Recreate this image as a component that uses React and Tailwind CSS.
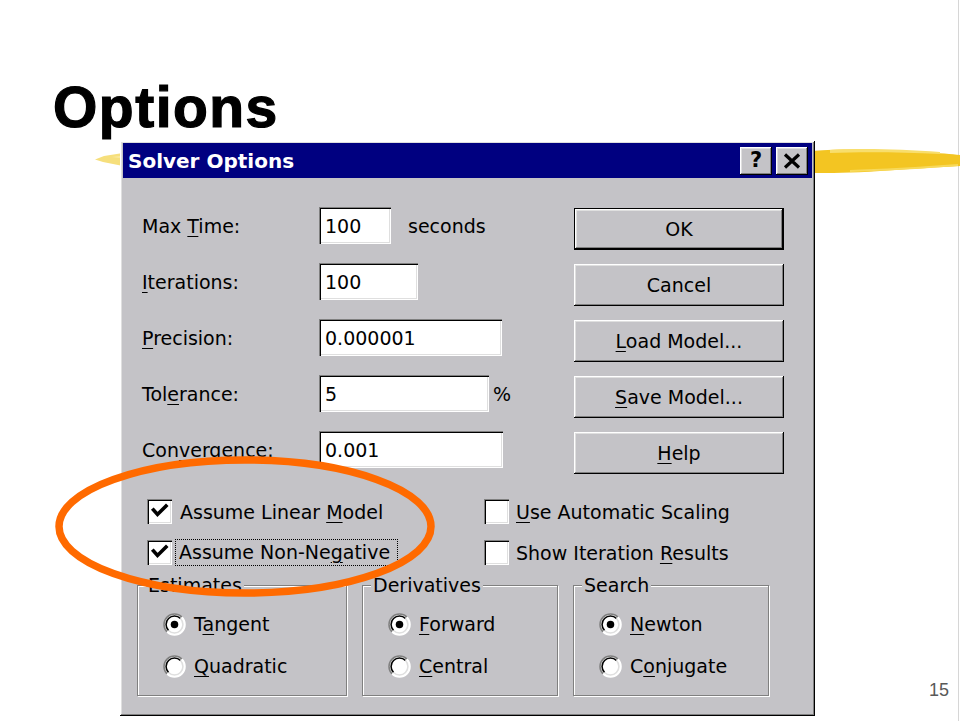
import React from 'react'

const raised =
  'shadow-[inset_-1px_-1px_0_#000,inset_1px_1px_0_#fff,inset_-2px_-2px_0_#808080,inset_2px_2px_0_#dfdfdf]'
const sunken =
  'shadow-[inset_1px_1px_0_#808080,inset_2px_2px_0_#000,inset_-1px_-1px_0_#fff,inset_-2px_-2px_0_#dfdfdf]'

const Key = ({ children }) => (
  <span className="underline underline-offset-[3px] decoration-1">{children}</span>
)

const Field = ({ label, value, width, suffix, suffixGap }) => (
  <div className="flex h-[56px] items-start">
    <div className="w-[177px] leading-[38px]">{label}</div>
    <div className={`h-[37px] bg-white pl-[6px] leading-[38px] ${sunken}`} style={{ width }}>
      {value}
    </div>
    {suffix && (
      <div className="leading-[38px]" style={{ marginLeft: suffixGap }}>
        {suffix}
      </div>
    )}
  </div>
)

const Btn = ({ children, isDefault }) =>
  isDefault ? (
    <div className="h-[42px] border border-black">
      <div className={`flex h-full items-center justify-center bg-[#c4c3c7] ${raised}`}>{children}</div>
    </div>
  ) : (
    <div className={`flex h-[42px] items-center justify-center bg-[#c4c3c7] ${raised}`}>{children}</div>
  )

const Check = ({ checked }) => (
  <div className={`relative h-[25px] w-[25px] shrink-0 bg-white ${sunken}`}>
    {checked && (
      <svg viewBox="0 0 25 25" className="absolute inset-0 h-full w-full">
        <path d="M6.5 11 L10.5 15.5 L19 7" fill="none" stroke="#000" strokeWidth="3.6" strokeLinecap="square" />
      </svg>
    )}
  </div>
)

const Radio = ({ checked }) => (
  <svg width="23" height="23" viewBox="0 0 22 22" className="shrink-0">
    <circle cx="11" cy="11" r="10" fill="#fff" />
    <path d="M3.9 18.1 A10 10 0 0 1 18.1 3.9" fill="none" stroke="#808080" strokeWidth="1.5" />
    <path d="M5.3 16.7 A8 8 0 0 1 16.7 5.3" fill="none" stroke="#000" strokeWidth="1.5" />
    <path d="M18.1 3.9 A10 10 0 0 1 3.9 18.1" fill="none" stroke="#fff" strokeWidth="1.5" />
    <path d="M16.7 5.3 A8 8 0 0 1 5.3 16.7" fill="none" stroke="#dfdfdf" strokeWidth="1.5" />
    {checked && <circle cx="11" cy="11" r="3.6" fill="#000" />}
  </svg>
)

const Group = ({ title, width, items }) => (
  <div
    className="relative h-[111px] border border-[#808080] shadow-[1px_1px_0_#fff,inset_1px_1px_0_#fff]"
    style={{ width }}
  >
    <span className="absolute left-[8px] top-[-12px] bg-[#c4c3c7] px-[2px] leading-[22px]">{title}</span>
    <div className="flex flex-col gap-[19px] pl-[25px] pt-[27px]">
      {items.map((it, i) => (
        <div key={i} className="flex h-[23px] items-center gap-[8px] leading-[23px]">
          <Radio checked={i === 0} />
          <span>{it}</span>
        </div>
      ))}
    </div>
  </div>
)

export default function App() {
  return (
    <div className="relative h-[721px] w-[962px] overflow-hidden bg-white">
      {/* slide edge */}
      <div className="absolute bottom-0 right-[3px] top-0 w-px bg-[#d6d6d6]" />

      {/* yellow brush strokes behind the dialog */}
      <svg className="absolute left-0 top-[140px]" width="962" height="40" viewBox="0 140 962 40">
        <path d="M123 153 L104 156 L95 159.5 L103 162 L123 166 Z" fill="#f6df7c" />
        <path d="M112 157 L123 156 L123 158 Z" fill="#fbeeb0" />
        <path
          d="M812 151 C850 148 890 150 920 152 C940 153 952 154 960 155 L960 166 C940 167 910 169 880 171 C850 173 830 173 812 173 Z"
          fill="#f3c522"
        />
        <path d="M830 150 C860 148 900 149 940 152 L940 154 C900 152 860 152 830 153 Z" fill="#f8de6c" />
        <path d="M850 170 C880 169 920 167 958 164 L958 166 C920 169 880 171 850 172 Z" fill="#f7d95a" />
      </svg>

      <h1 className="pl-[53px] pt-[79px] font-['Liberation_Sans',Arial,sans-serif] text-[57px] font-bold leading-none tracking-[1.5px] text-black [-webkit-text-stroke:1.2px_black]">
        Options
      </h1>

      {/* dialog */}
      <div
        className={`relative z-10 ml-[120px] mt-[5px] flex h-[575px] w-[695px] flex-col bg-[#c4c3c7] p-[2px] pl-[3px] pr-[3px] font-['DejaVu_Sans',sans-serif] text-[19px] text-black ${raised}`}
      >
        <div className="flex h-[35px] items-center bg-[#000080] pl-[5px] pr-[4px]">
          <span className="flex-1 text-[20px] font-bold text-white">Solver Options</span>
          <div className="flex gap-[4px]">
            <div className={`flex h-[28px] w-[32px] items-center justify-center bg-[#c4c3c7] text-[21px] font-bold leading-none ${raised}`}>
              ?
            </div>
            <div className={`flex h-[28px] w-[32px] items-center justify-center bg-[#c4c3c7] ${raised}`}>
              <svg width="18" height="16" viewBox="0 0 18 16">
                <path d="M2 1.5 L16 14.5 M16 1.5 L2 14.5" stroke="#000" strokeWidth="3.2" />
              </svg>
            </div>
          </div>
        </div>

        <div className="flex flex-1 flex-col pl-[19px] pt-[29px]">
          <div className="flex">
            <div className="w-[432px]">
              <Field label={<>Max <Key>T</Key>ime:</>} value="100" width={72} suffix="seconds" suffixGap={17} />
              <Field label={<><Key>I</Key>terations:</>} value="100" width={99} />
              <Field label={<><Key>P</Key>recision:</>} value="0.000001" width={183} />
              <Field label={<>Tol<Key>e</Key>rance:</>} value="5" width={170} suffix="%" suffixGap={4} />
              <Field label={<>Con<Key>v</Key>ergence:</>} value="0.001" width={184} />
            </div>
            <div className="mt-px flex w-[210px] flex-col gap-[14px]">
              <Btn isDefault>OK</Btn>
              <Btn>Cancel</Btn>
              <Btn><span><Key>L</Key>oad Model...</span></Btn>
              <Btn><span><Key>S</Key>ave Model...</span></Btn>
              <Btn><span><Key>H</Key>elp</span></Btn>
            </div>
          </div>

          <div className="ml-[5px] mt-[12px] grid grid-cols-[337px_1fr] gap-y-[16px]">
            <div className="flex h-[25px] items-center gap-[8px]">
              <Check checked />
              <span className="leading-[26px]">Assume Linear <Key>M</Key>odel</span>
            </div>
            <div className="flex h-[25px] items-center gap-[7px]">
              <Check />
              <span className="leading-[26px]"><Key>U</Key>se Automatic Scaling</span>
            </div>
            <div className="flex h-[25px] items-center gap-[4px]">
              <Check checked />
              <span className="pl-[3px] pr-[7px] leading-[25px] outline-1 outline-dotted outline-black">
                Assume Non-Ne<Key>g</Key>ative
              </span>
            </div>
            <div className="flex h-[25px] items-center gap-[7px]">
              <Check />
              <span className="leading-[26px]">Show Iteration <Key>R</Key>esults</span>
            </div>
          </div>

          <div className="-ml-[5px] mt-[20px] flex gap-[15px]">
            <Group title="Estimates" width={210} items={[<>T<Key>a</Key>ngent</>, <><Key>Q</Key>uadratic</>]} />
            <Group title="Derivatives" width={196} items={[<><Key>F</Key>orward</>, <><Key>C</Key>entral</>]} />
            <Group title="Search" width={196} items={[<><Key>N</Key>ewton</>, <>C<Key>o</Key>njugate</>]} />
          </div>
        </div>
      </div>

      {/* orange highlight ellipse */}
      <svg className="pointer-events-none absolute left-0 top-0 z-20" width="962" height="721">
        <ellipse cx="245" cy="526.5" rx="186" ry="66.5" fill="none" stroke="#ff6a00" strokeWidth="7.5" />
      </svg>

      <span className="absolute left-[929px] top-[677px] font-['Liberation_Sans',Arial,sans-serif] text-[18px] text-[#595959]">
        15
      </span>
    </div>
  )
}
